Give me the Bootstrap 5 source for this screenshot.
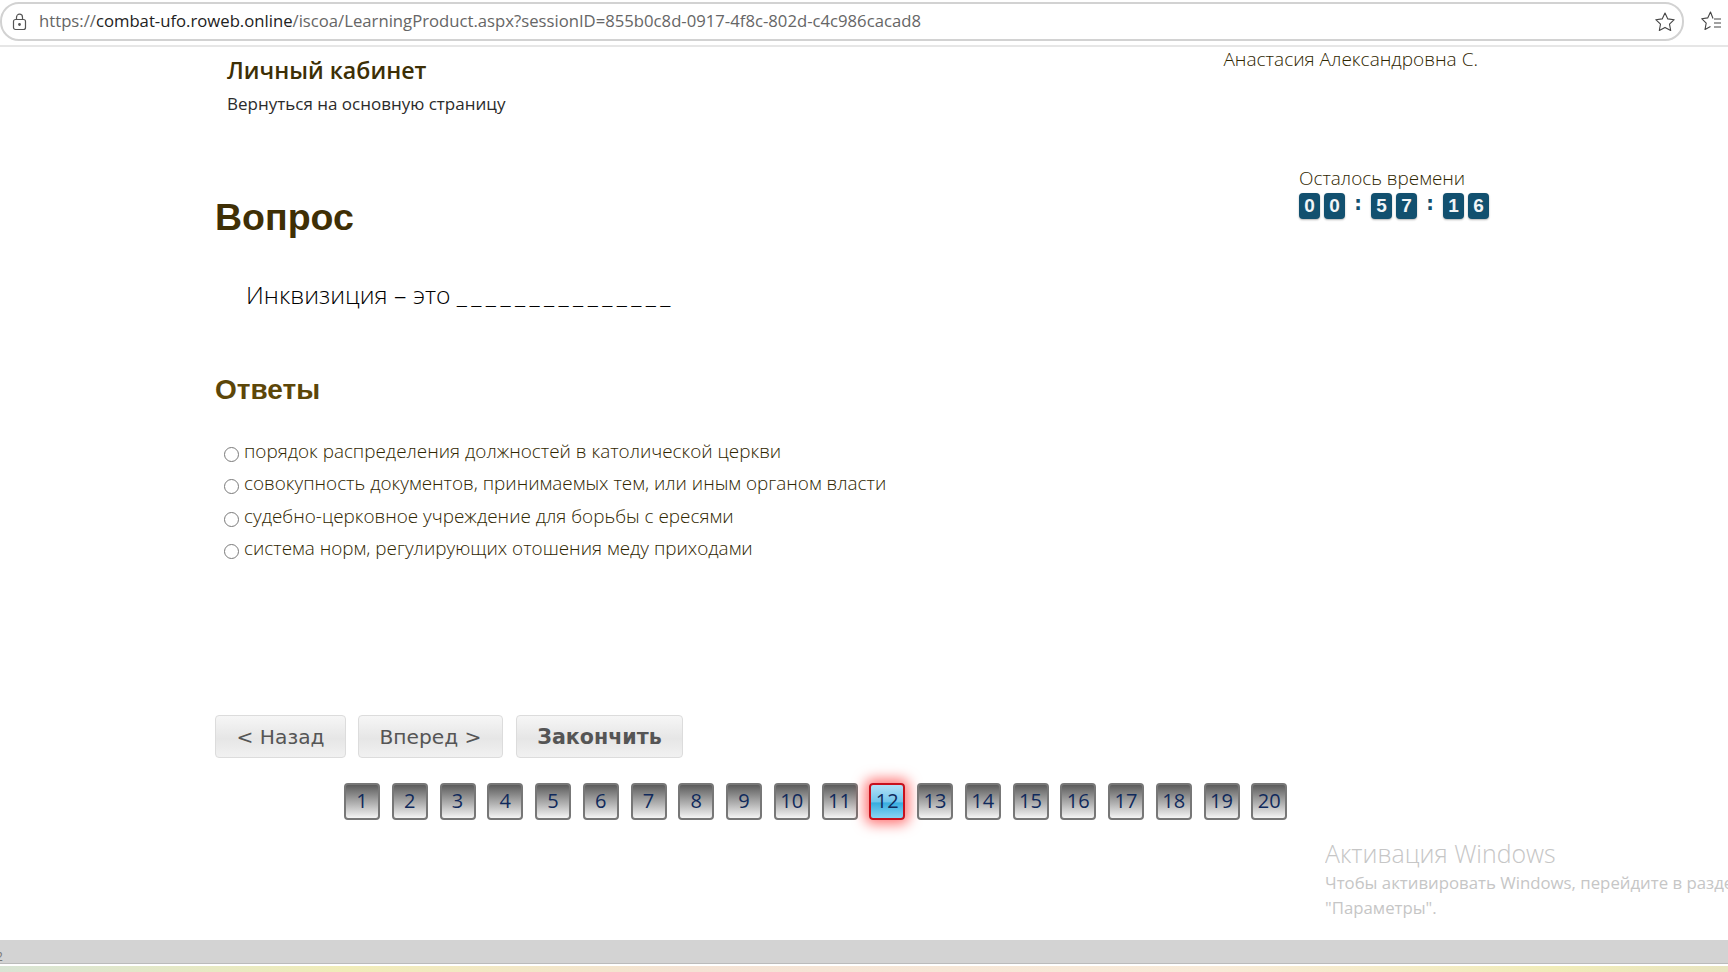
<!DOCTYPE html>
<html lang="ru">
<head>
    <meta charset="UTF-8">
    <meta name="viewport" content="width=device-width, initial-scale=1.0">
    <title>Вопрос</title>
    <link href="https://cdn.jsdelivr.net/npm/bootstrap@5.3.0/dist/css/bootstrap.min.css" rel="stylesheet">
    <style>
        html, body { height: 972px; overflow: hidden; }
        body { background: #fff; font-family: "Open Sans", "Noto Sans", sans-serif; color: #3f3309; position: relative; }

        .addr-wrap { height: 47px; border-bottom: 2px solid #e6e6e6; padding: 2px 0 0 0; }
        .addr-box { width: 1684px; height: 39px; border: 2px solid #d2d2d2; border-radius: 19px; padding: 0 6px 0 10px; }
        .addr-url { font-family: "Open Sans", sans-serif; font-size: 16.7px; color: #666; margin-left: 12px; padding-bottom: 2px; white-space: nowrap; }
        .addr-url b { font-weight: 400; color: #222; }
        .fav-icon { margin-left: 17px; }

        .page-wrap { padding: 0 239px 0 215px; height: 893px; }
        .head-row { height: 108px; }
        .cabinet-box { padding: 8px 0 0 12px; }
        .cabinet-title { font-size: 23.2px; font-weight: 600; line-height: 30px; color: #3d2f05; margin: 0 0 7px; }
        .cabinet-link { font-size: 17px; line-height: 24px; color: #2b2b2b; text-decoration: none; }
        .user-name { font-size: 19.05px; font-weight: 300; line-height: 26px; margin: -1px 11px 0 0; color: #2f2600; }

        .question-row { height: 103px; }
        .question-title { font-family: "Liberation Sans", sans-serif; font-weight: 700; font-size: 37.5px; line-height: 44px; color: #3f2f05; margin: 40px 0 0; }
        .timer-box { width: 190px; padding-top: 10px; }
        .timer-label { font-size: 18.9px; font-weight: 300; line-height: 26px; margin-bottom: 2px; color: #2f2600; }
        .time-digit { width: 21px; height: 26px; background: #12506f; color: #f2f5f7; border-radius: 4px; font-family: "Liberation Sans", sans-serif; font-weight: 700; font-size: 19px; box-shadow: 0 1px 2px rgba(0,0,0,.3); }
        .time-sep { width: 26px; height: 26px; color: #12506f; font-family: "DejaVu Sans", sans-serif; font-weight: 700; font-size: 19px; margin: 0 -4px; padding: 0 0 6px 0; }

        .question-text { font-size: 24.7px; font-weight: 300; line-height: 32px; color: #000; margin: 21px 0 0 31px; }
        .blank-line { letter-spacing: 4.4px; }
        .answers-title { font-family: "Liberation Sans", sans-serif; font-weight: 700; font-size: 28px; line-height: 34px; color: #5c4608; margin: 62px 0 0; }
        .answer-list { margin: 31px 0 0 9px; }
        .answer-item { height: 32.4px; gap: 5px; }
        .answer-item .form-check-input { width: 15px; height: 15px; margin: 9px 0 0; border: 1.5px solid #7a7a7a; background-color: #fff; flex: none; }
        .answer-item label { font-size: 18.9px; font-weight: 300; line-height: 26px; color: #2f2600; white-space: nowrap; }

        .btn-row { margin-top: 147px; }
        .nav-btn { height: 43px; padding: 3px 0 0; font-family: "DejaVu Sans", sans-serif; font-size: 20.2px; color: #555; border: 1px solid #dcdcdc; border-radius: 4px; background: linear-gradient(#f6f6f6, #e6e6e6 55%, #f1f1f1); }
        .btn-back { width: 131px; }
        .btn-next { width: 145px; margin-left: 12px; }
        .btn-finish { width: 167px; margin-left: 13px; font-size: 20.6px; font-weight: 700; }

        .pager-row { margin: 25px 0 0 129px; gap: 11.75px; }
        .pager-btn { width: 36px; height: 37px; padding: 0; font-family: "Open Sans", sans-serif; font-size: 20px; color: #102a5c; border: 2px solid #777; border-radius: 4px; background: linear-gradient(#5c5c5c, #f4f4f4); }
        .pager-btn.is-current { border-color: #c8101c; background: linear-gradient(#b3e0f6, #72c6ec 50%, #38aee0 55%, #8ad3f3); box-shadow: 0 0 13px 4px rgba(255,0,0,.55); }

        .activate-note { position: absolute; left: 1325px; top: 837px; width: 403px; overflow: hidden; white-space: nowrap; color: #c6c6c6; font-family: "Open Sans", sans-serif; }
        .activate-title { font-size: 24.9px; line-height: 33px; font-weight: 300; }
        .activate-text { font-size: 16.8px; line-height: 25px; }

        .bottom-bar { position: absolute; left: 0; right: 0; top: 940px; height: 24px; background: #d3d3d3; border-bottom: 1px solid #bbb; }
        .bottom-num { font-size: 12px; line-height: 12px; color: #777; position: absolute; left: -4px; top: 11px; }
        .bottom-strip { position: absolute; left: 0; right: 0; top: 966px; height: 6px; background: linear-gradient(90deg, #d8e4d4, #f0ecb8 20%, #f4e2d4 40%, #f8ead8 70%, #f0ecb8 90%, #e8e4c0); }
    </style>
</head>
<body>

    <div class="addr-wrap d-flex align-items-start">
        <div class="addr-box d-flex align-items-center">
            <svg width="15" height="18" viewBox="0 0 15 18" fill="none" stroke="#555" stroke-width="1.2">
                <rect x="1.5" y="6.5" width="12" height="10" rx="2"/>
                <path d="M4.5 6.5V4.2a3 3 0 0 1 6 0v2.3"/>
                <circle cx="7.5" cy="11.5" r=".8" fill="#555"/>
            </svg>
            <span class="addr-url flex-grow-1">https://<b>combat-ufo.roweb.online</b>/iscoa/LearningProduct.aspx?sessionID=855b0c8d-0917-4f8c-802d-c4c986cacad8</span>
            <svg width="22" height="22" viewBox="0 0 22 22" fill="none" stroke="#444" stroke-width="1.1" stroke-linejoin="round">
                <path d="M11 2l2.800 5.900 6.400.8-4.700 4.400 1.200 6.400L11 16.400l-5.700 3.100 1.200-6.400L1.800 8.700l6.400-.8z"/>
            </svg>
        </div>
        <svg class="fav-icon mt-2" width="26" height="22" viewBox="0 0 26 22" fill="none" stroke="#444" stroke-width="1.1" stroke-linejoin="round">
            <path d="M12 8.500l-2.500-6.500-2.800 5.900-6 .8 4.500 4.400-1.200 6.400 5.500-3.100"/>
            <path d="M13 9h7M13 13h7M13 17h7"/>
        </svg>
    </div>

    <div class="page-wrap">
        <div class="head-row d-flex justify-content-between align-items-start">
            <div class="cabinet-box">
                <h2 class="cabinet-title">Личный кабинет</h2>
                <a class="cabinet-link" href="#">Вернуться на основную страницу</a>
            </div>
            <p class="user-name">Анастасия Александровна С.</p>
        </div>

        <div class="question-row d-flex justify-content-between align-items-start">
            <h1 class="question-title">Вопрос</h1>
            <div class="timer-box">
                <div class="timer-label">Осталось времени</div>
                <div class="d-flex gap-1">
                    <span class="time-digit d-flex align-items-center justify-content-center">0</span>
                    <span class="time-digit d-flex align-items-center justify-content-center">0</span>
                    <span class="time-sep d-flex align-items-center justify-content-center">:</span>
                    <span class="time-digit d-flex align-items-center justify-content-center">5</span>
                    <span class="time-digit d-flex align-items-center justify-content-center">7</span>
                    <span class="time-sep d-flex align-items-center justify-content-center">:</span>
                    <span class="time-digit d-flex align-items-center justify-content-center">1</span>
                    <span class="time-digit d-flex align-items-center justify-content-center">6</span>
                </div>
            </div>
        </div>

        <p class="question-text">Инквизиция – это <span class="blank-line">_______________</span></p>

        <h3 class="answers-title">Ответы</h3>

        <div class="answer-list">
            <div class="answer-item d-flex align-items-start">
                <input class="form-check-input" type="radio" name="answer" id="a1">
                <label for="a1">порядок распределения должностей в католической церкви</label>
            </div>
            <div class="answer-item d-flex align-items-start">
                <input class="form-check-input" type="radio" name="answer" id="a2">
                <label for="a2">совокупность документов, принимаемых тем, или иным органом власти</label>
            </div>
            <div class="answer-item d-flex align-items-start">
                <input class="form-check-input" type="radio" name="answer" id="a3">
                <label for="a3">судебно-церковное учреждение для борьбы с ересями</label>
            </div>
            <div class="answer-item d-flex align-items-start">
                <input class="form-check-input" type="radio" name="answer" id="a4">
                <label for="a4">система норм, регулирующих отошения меду приходами</label>
            </div>
        </div>

        <div class="btn-row d-flex">
            <button class="btn nav-btn btn-back">&lt; Назад</button>
            <button class="btn nav-btn btn-next">Вперед &gt;</button>
            <button class="btn nav-btn btn-finish">Закончить</button>
        </div>

        <div class="pager-row d-flex">
            <button class="btn pager-btn">1</button>
            <button class="btn pager-btn">2</button>
            <button class="btn pager-btn">3</button>
            <button class="btn pager-btn">4</button>
            <button class="btn pager-btn">5</button>
            <button class="btn pager-btn">6</button>
            <button class="btn pager-btn">7</button>
            <button class="btn pager-btn">8</button>
            <button class="btn pager-btn">9</button>
            <button class="btn pager-btn">10</button>
            <button class="btn pager-btn">11</button>
            <button class="btn pager-btn is-current">12</button>
            <button class="btn pager-btn">13</button>
            <button class="btn pager-btn">14</button>
            <button class="btn pager-btn">15</button>
            <button class="btn pager-btn">16</button>
            <button class="btn pager-btn">17</button>
            <button class="btn pager-btn">18</button>
            <button class="btn pager-btn">19</button>
            <button class="btn pager-btn">20</button>
        </div>
    </div>

    <div class="activate-note">
        <div class="activate-title">Активация Windows</div>
        <div class="activate-text">Чтобы активировать Windows, перейдите в раздел<br>"Параметры".</div>
    </div>

    <div class="bottom-bar"><span class="bottom-num">2</span></div>
    <div class="bottom-strip"></div>

    <script src="https://cdn.jsdelivr.net/npm/bootstrap@5.3.0/dist/js/bootstrap.bundle.min.js"></script>
</body>
</html>
